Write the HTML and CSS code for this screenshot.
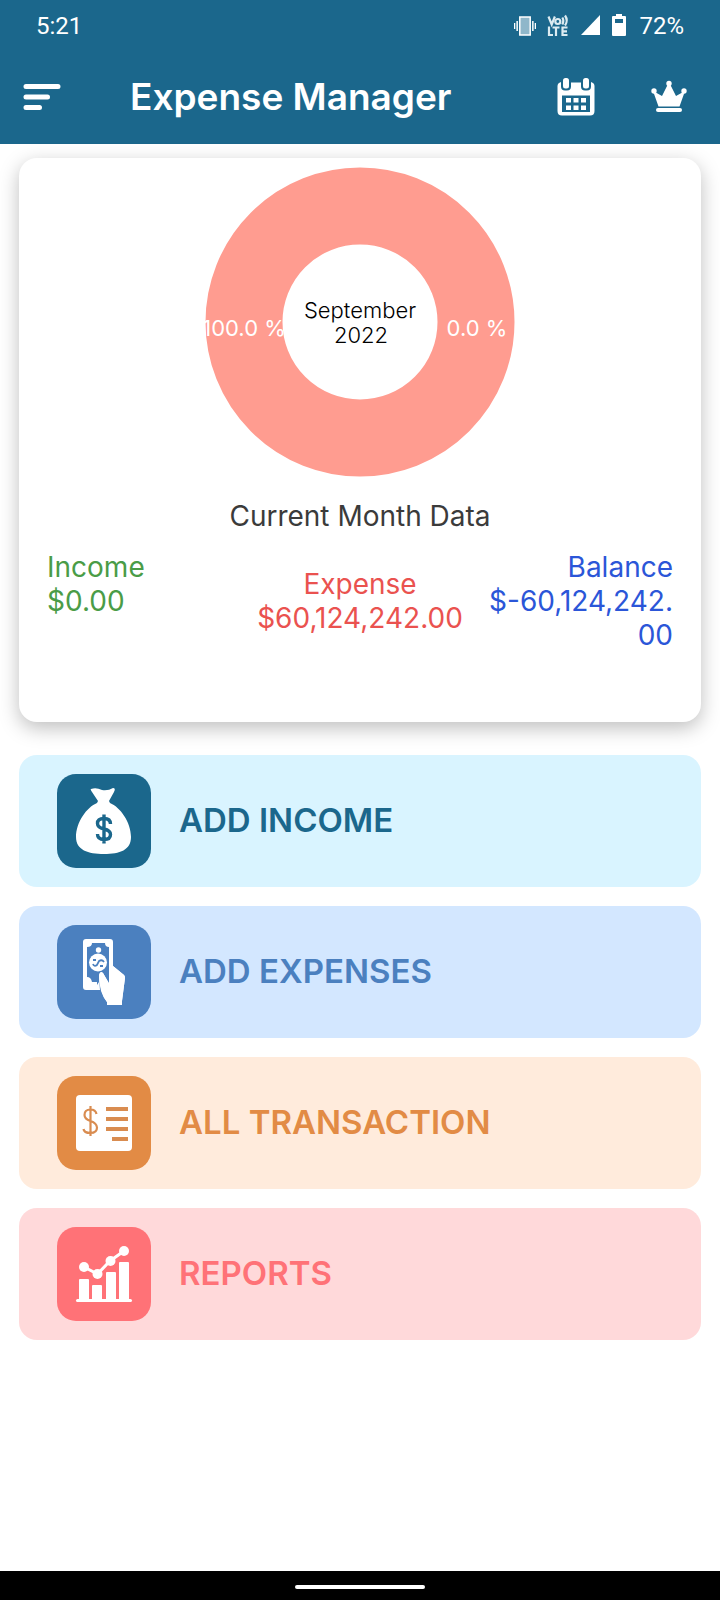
FILE: index.html
```html
<!DOCTYPE html>
<html lang="en">
<head>
<meta charset="utf-8">
<meta name="viewport" content="width=device-width, initial-scale=1">
<title>Expense Manager</title>
<link rel="stylesheet" href="styles.css">
</head>
<body>
<div class="screen">
  <header class="header">
    <div class="status">
      <span class="clock">5:21</span>
      <svg class="status-icons" width="114" height="24" viewBox="0 0 114 24" fill="#fff" aria-hidden="true">
        <path d="M0 9h1.300v6H0zM2.400 7h1.500v10H2.400zM20.700 9H22v6h-1.300zM18.100 7h1.500v10h-1.500z"/>
        <rect x="5.800" y="3" width="10.400" height="18" fill="#8fb7ca" stroke="#fff" stroke-width="1.500"/>
        <g fill="none" stroke="#dcebf1" stroke-width="2.200">
          <path d="M34.500 2.500l3.200 8 3.200-8M48.300 3.500q2 3 0 7M51 1.500q3.500 5 0 10"/>
          <circle cx="43.800" cy="7.500" r="2.500"/>
          <path d="M35 12.500v8.500h4M38.500 13.500h7M42 13.500v8.500M53.500 13.500h-5v7.500h5M48.500 17.300h4.500"/>
        </g>
        <path d="M86 1v20H67z"/>
        <path d="M102 0h6v2h3q1 0 1 1v18q0 1-1 1h-12q-1 0-1-1V3q0-1 1-1h3zM101 5v4h8V5z" fill-rule="evenodd"/>
      </svg>
      <span class="battery">72%</span>
    </div>
    <div class="appbar">
      <button class="icon-button" aria-label="Menu">
        <svg width="38" height="38" viewBox="0 0 38 38" stroke="#fff" stroke-width="5" stroke-linecap="round"><path d="M3 8.500h32M3 19h21.500M3 29.500h13.500"/></svg>
      </button>
      <h1 class="title">Expense Manager</h1>
      <button class="icon-button calendar" aria-label="Calendar">
        <svg width="38" height="38" viewBox="0 0 38 38" fill="#fff">
          <path fill-rule="evenodd" d="M4 4q-3.500 1-3.500 4v25q0 4.500 4.500 4.500h28q4.500 0 4.500-4.500V8q0-3-3.500-4v4.500q0 4-4 4h-2q-4 0-4-4V4.500H14v4q0 4-4 4H8q-4 0-4-4zM5 17.500h28V34H5z"/>
          <rect x="6" y="0" width="6" height="10.500" rx="2.500"/><rect x="26" y="0" width="6" height="10.500" rx="2.500"/>
          <path d="M9 20h5v4.500H9zM16.500 20h5v4.500h-5zM24 20h5v4.500h-5zM9 27.500h5V32H9zM16.500 27.500h5V32h-5zM24 27.500h5V32h-5z"/>
        </svg>
      </button>
      <button class="icon-button" aria-label="Premium">
        <svg width="38" height="38" viewBox="0 0 38 38" fill="#fff">
          <path d="M3 13l9 5 6-12h2l6 12 9-5-5.500 15.500h-21z"/>
          <circle cx="19" cy="5.500" r="2.700"/><circle cx="4" cy="13" r="2.700"/><circle cx="34" cy="13" r="2.700"/>
          <rect x="6" y="30" width="26" height="4" rx="2"/>
        </svg>
      </button>
    </div>
  </header>

  <main class="content">
    <section class="card">
      <svg class="donut" width="310" height="310" viewBox="0 0 310 310" role="img" aria-label="September 2022 chart">
        <circle class="ring" cx="155" cy="155" r="116"/>
        <text class="share" x="39" y="169">100.0 %</text>
        <text class="share" x="272" y="169">0.0 %</text>
        <text class="month" x="155" y="151">September</text>
        <text class="month" x="156" y="176">2022</text>
      </svg>
      <h2 class="caption">Current Month Data</h2>
      <div class="totals">
        <div class="total income">Income<br>$0.00</div>
        <div class="total expense">Expense<br>$60,124,242.00</div>
        <div class="total balance">Balance<br>$-60,124,242.<wbr>00</div>
      </div>
    </section>

    <nav class="menu">
      <button class="item add-income">
        <svg class="tile" viewBox="0 0 94 94" fill="#fff" aria-hidden="true">
          <path d="M34 15q5-2 11 1 6 1 11-2 3 0 1 4l-5 9 1 2c10 4 21 19 21 34 0 13-11 17-27 17s-28-4-28-17c0-15 11-30 21-34l1-2-6-9q-2-3-1-3z"/>
          <path d="M47 40.500v29M53.500 50q0-5.500-6.500-5.500t-6.500 5q0 4 6.500 5.500t6.500 5.500q0 5-6.500 5t-6.500-5.500" fill="none" stroke="#1b678c" stroke-width="3.400"/>
        </svg>
        <span>ADD INCOME</span>
      </button>
      <button class="item add-expenses">
        <svg class="tile" viewBox="0 0 94 94" fill="#fff" aria-hidden="true">
          <path fill-rule="evenodd" d="M29 14h24q3 0 3 3v24l11 9q1 1 1 3l-3 23v4H50v-3q-6-7-8-25l1 13 0 0H29q-3 0-3-3V17q0-3 3-3zM30 22v30q4 0 5 5h5v3l2-3v-6q1-6 4-3l6 11V22q-4 0-4-4H35q0 4-5 4z"/>
          <path d="M42 50q1-4 4-2l6 10V41l4 0 11 9q1 1 1 3l-3 23v4H50v-3q-8-9-8-27z"/>
          <circle cx="41.500" cy="25" r="2.700"/><circle cx="41" cy="37.500" r="9"/>
          <path d="M36 39q1 3 4 1l2-4q3-2 5 1M36 35h3M43 41h3" fill="none" stroke="#4b80bf" stroke-width="1.800"/>
        </svg>
        <span>ADD EXPENSES</span>
      </button>
      <button class="item all-transaction">
        <svg class="tile" viewBox="0 0 94 94" fill="#fff" aria-hidden="true">
          <rect x="19" y="19" width="56" height="56" rx="4"/>
          <path d="M49 31h22v4H49zM49 41h22v4H49zM49 51h22v4H49zM55 61h16v4H55z" fill="#d98c50"/>
          <path d="M33.500 30v30M39.500 38q-1-4.500-6-4.500-6 0-6 5.500 0 4 6 6t6.500 6.500q0 5.500-6.500 5.500t-7-4" fill="none" stroke="#d98c50" stroke-width="2.200"/>
        </svg>
        <span>ALL TRANSACTION</span>
      </button>
      <button class="item reports">
        <svg class="tile" viewBox="0 0 94 94" fill="#fff" aria-hidden="true">
          <rect x="19" y="72" width="56" height="3" rx="1.500"/>
          <path d="M22 53q0-1 1-1h8q1 0 1 1v20H22zM35 59q0-1 1-1h8q1 0 1 1v14H35zM49 46q0-1 1-1h8q1 0 1 1v27H49zM62 36q0-1 1-1h8q1 0 1 1v37H62z"/>
          <path d="M27 40l13.500 7L53 34l14-10" fill="none" stroke="#fff" stroke-width="3"/>
          <circle cx="27" cy="40" r="5"/><circle cx="40.500" cy="47" r="5"/><circle cx="53.500" cy="34" r="5"/><circle cx="67" cy="24" r="5"/>
        </svg>
        <span>REPORTS</span>
      </button>
    </nav>
  </main>

  <footer class="navbar"><span class="handle"></span></footer>
</div>
</body>
</html>
```
FILE: styles.css
```css
* { box-sizing: border-box; }

body {
  margin: 0;
  background: #fff;
  font-family: Inter, "Liberation Sans", sans-serif;
}

button {
  border: 0;
  padding: 0;
  background: none;
  font: inherit;
  color: inherit;
}

.screen {
  display: flex;
  flex-direction: column;
  min-height: 100vh;
}

.header {
  padding-bottom: 12px;
  background: #1b678c;
  color: #fff;
}

.status {
  display: flex;
  align-items: center;
  height: 52px;
  padding: 0 36px;
  font-family: Roboto, sans-serif;
  font-size: 24px;
}

.status-icons { margin: 0 11px 0 auto; }

.appbar {
  display: flex;
  align-items: center;
  height: 80px;
  padding: 14px 32px 4px 23px;
}

.icon-button { display: flex; }

.calendar { margin-right: 55px; }

.title {
  flex: 1;
  margin: 0;
  padding-left: 69px;
  font-size: 37px;
  font-weight: 600;
  line-height: 44px;
}

.content {
  flex: 1;
  display: flex;
  flex-direction: column;
  gap: 33px;
  padding: 14px 19px;
}

.card {
  display: flex;
  flex-direction: column;
  align-items: center;
  padding: 9px 28px 70px;
  border-radius: 18px;
  background: #fff;
  box-shadow: 0 6px 20px rgba(0, 0, 0, 0.26);
}

.ring {
  fill: none;
  stroke: #ff9c90;
  stroke-width: 77px;
}

.donut { overflow: visible; }

.donut text {
  font-size: 22px;
  text-anchor: middle;
}

.share { fill: #fff; }

.month {
  fill: #000;
  font-weight: 300;
}

.caption {
  margin: 22px 0 17px;
  color: #3b3b3b;
  font-size: 28px;
  font-weight: 400;
  line-height: 34px;
}

.totals {
  display: grid;
  grid-template-columns: repeat(3, minmax(0, 1fr));
  align-self: stretch;
  font-size: 28px;
  line-height: 34px;
}

.income { color: #4a9c47; }

.expense {
  padding-top: 17px;
  color: #ea524f;
  text-align: center;
}

.balance {
  color: #2b56d8;
  text-align: right;
}

.menu {
  display: grid;
  gap: 19px;
}

.item {
  display: flex;
  align-items: center;
  gap: 28px;
  padding: 19px 38px;
  border-radius: 18px;
  font-size: 33px;
  font-weight: 600;
  line-height: 40px;
  text-align: left;
}

.item span { padding-bottom: 2px; }

.tile {
  width: 94px;
  height: 94px;
  border-radius: 19px;
}

.add-income { background: #d9f4ff; color: #1b678c; }
.add-income .tile { background: #1b678c; }

.add-expenses { background: #d3e7ff; color: #4b80bf; }
.add-expenses .tile { background: #4b80bf; }

.all-transaction { background: #ffebdc; color: #e28b45; }
.all-transaction .tile { background: #e28b45; }

.reports { background: #ffd9da; color: #ff7277; }
.reports .tile { background: #ff7277; }

.navbar {
  display: flex;
  align-items: center;
  justify-content: center;
  height: 29px;
  padding-top: 3px;
  background: #000;
}

.handle {
  width: 130px;
  height: 4px;
  border-radius: 2px;
  background: #fff;
}
```
